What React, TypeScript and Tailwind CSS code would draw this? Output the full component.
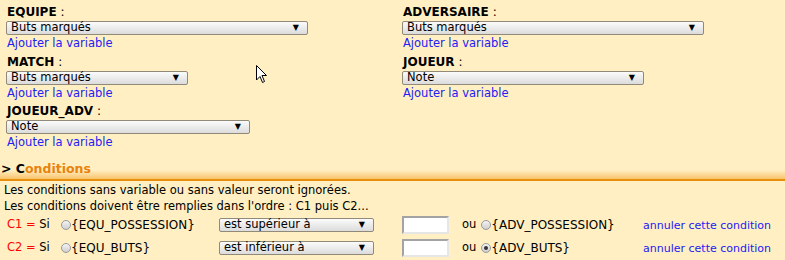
const font = { fontFamily: '"DejaVu Sans", Verdana, sans-serif' };

function Select({ value, width }: { value: string; width: string }) {
  return (
    <div
      className={`${width} flex h-[14px] items-center justify-between rounded-[2px] border border-[#928a78] bg-gradient-to-b from-[#fbfbfb] to-[#dcdcdc] pl-[4px] pr-[8px] text-[11.5px] leading-none text-black`}
    >
      <span>{value}</span>
      <span className="text-[8px]">▼</span>
    </div>
  );
}

function Field({ label, value, width }: { label: string; value: string; width: string }) {
  return (
    <div className="flex h-[49.5px] flex-col">
      <div className="h-[14px] pl-[1px] text-[12px] leading-[14px]">
        <span className="font-bold">{label}</span> :
      </div>
      <div className="mt-[2px]">
        <Select value={value} width={width} />
      </div>
      <div className="mt-[1px] pl-[1px] text-[11.5px] leading-[14px] text-[#2121f5]">Ajouter la variable</div>
    </div>
  );
}

function Radio({ checked }: { checked?: boolean }) {
  return (
    <span className="inline-flex h-[10px] w-[10px] shrink-0 items-center justify-center rounded-full border border-[#9a9a9a] bg-gradient-to-b from-[#f4f4f4] to-[#cfcfcf]">
      {checked && <span className="h-[4px] w-[4px] rounded-full bg-[#333]" />}
    </span>
  );
}

function Condition({
  n,
  left,
  op,
  right,
  checked,
}: {
  n: string;
  left: string;
  op: string;
  right: string;
  checked?: boolean;
}) {
  return (
    <div className="grid h-[23px] grid-cols-[54px_158px_183px_60px_181px_1fr] items-center text-[11.5px] leading-none">
      <div>
        <span className="text-[#ff0000]">{n} =</span> Si
      </div>
      <div className="flex items-center">
        <Radio />
        <span className="text-[12px]">{left}</span>
      </div>
      <div>
        <Select value={op} width="w-[155px]" />
      </div>
      <div>
        <div className="h-[18px] w-[47px] border-2 border-[#a3a3a3] border-b-[#e6e6e6] border-r-[#e6e6e6] bg-white" />
      </div>
      <div className="flex items-center">
        <span className="mr-[5px]">ou</span>
        <Radio checked={checked} />
        <span className="text-[12px]">{right}</span>
      </div>
      <div className="text-[11px] text-[#2121f5]">annuler cette condition</div>
    </div>
  );
}

export default function App() {
  return (
    <div className="relative h-[260px] w-[785px] overflow-hidden bg-[#ffefc2] text-black" style={font}>
      <div className="grid grid-cols-[396px_1fr] pl-[6px] pt-[5px]">
        <Field label="EQUIPE" value="Buts marqués" width="w-[302px]" />
        <Field label="ADVERSAIRE" value="Buts marqués" width="w-[302px]" />
        <Field label="MATCH" value="Buts marqués" width="w-[182px]" />
        <Field label="JOUEUR" value="Note" width="w-[242px]" />
        <Field label="JOUEUR_ADV" value="Note" width="w-[244px]" />
      </div>

      <div className="mt-[7px] border-b-2 border-[#e88f0e] bg-gradient-to-b from-[#ffefc2] from-50% to-[#f8c36a] pb-[3px]">
        <div className="pl-[1px] text-[12.5px] font-bold leading-[15px]">
          &gt; <span className="text-black">C</span>
          <span className="text-[#e8820c]">onditions</span>
        </div>
      </div>

      <div className="pl-[4px] pt-[1px] text-[11.5px] leading-[16px]">
        <div>Les conditions sans variable ou sans valeur seront ignorées.</div>
        <div>Les conditions doivent être remplies dans l'ordre : C1 puis C2...</div>
      </div>
      <div className="pl-[7px]">
        <Condition n="C1" left="{EQU_POSSESSION}" op="est supérieur à" right="{ADV_POSSESSION}" />
        <Condition n="C2" left="{EQU_BUTS}" op="est inférieur à" right="{ADV_BUTS}" checked />
      </div>

      <svg className="absolute left-[256px] top-[65px]" width="12" height="19" viewBox="0 0 12 19">
        <path d="M0.5 0.5 L0.5 15 L4 11.5 L6.5 17.5 L8.5 16.5 L6 10.5 L10.5 10.5 Z" fill="white" stroke="black" strokeWidth="1" />
      </svg>
    </div>
  );
}
